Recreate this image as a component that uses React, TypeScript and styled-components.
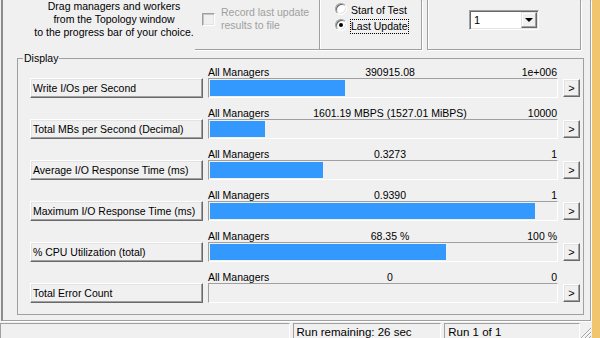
import styled, { createGlobalStyle } from "styled-components"

const GlobalStyle = createGlobalStyle`
  html, body {
    margin: 0;
    padding: 0;
    background: #f0f0f0;
  }
  body {
    font-family: "Liberation Sans", Arial, sans-serif;
    font-size: 10.5px;
    color: #000;
  }
`

type Metric = { name: string; value: string; max: string; fill: number }

const metrics: Metric[] = [
  { name: "Write I/Os per Second", value: "390915.08", max: "1e+006", fill: 0.3909 },
  { name: "Total MBs per Second (Decimal)", value: "1601.19 MBPS (1527.01 MiBPS)", max: "10000", fill: 0.1601 },
  { name: "Average I/O Response Time (ms)", value: "0.3273", max: "1", fill: 0.3273 },
  { name: "Maximum I/O Response Time (ms)", value: "0.9390", max: "1", fill: 0.939 },
  { name: "% CPU Utilization (total)", value: "68.35 %", max: "100 %", fill: 0.6835 },
  { name: "Total Error Count", value: "0", max: "0", fill: 0 },
]

const Screen = styled.div`
  width: 600px;
  height: 338px;
  display: flex;
  overflow: hidden;
  background: #f0f0f0;
`

const Window = styled.div`
  width: 592px;
  display: flex;
  flex-direction: column;
`

const Desktop = styled.div`
  flex: 1;
  background: #f1c46e;
`

const Page = styled.div`
  box-sizing: border-box;
  height: 321px;
  margin: 0 1px 0 1px;
  border-left: 2px solid #8c8c8c;
  border-right: 1px solid #a0a0a0;
  border-bottom: 1px solid #a0a0a0;
  box-shadow: 1px 1px 0 #fff;
`

const TopRow = styled.div`
  display: flex;
  height: 50px;
`

const Instructions = styled.div`
  margin-left: 30px;
  width: 162px;
  text-align: center;
  line-height: 13px;
  white-space: nowrap;
`

const RecordBox = styled.div`
  box-sizing: border-box;
  width: 124px;
  height: 50px;
  padding: 6px 0 0 7px;
  display: flex;
  align-items: flex-start;
  gap: 6px;
  border-bottom: 1px solid #a0a0a0;
  box-shadow: 0 1px 0 #fff;
`

const CheckBox = styled.span`
  box-sizing: border-box;
  width: 13px;
  height: 13px;
  margin-top: 7px;
  flex: none;
  background: #f0f0f0;
  border: 1px solid;
  border-color: #a0a0a0 #fff #fff #a0a0a0;
  box-shadow: inset 1px 1px 0 #c4c4c4, inset -1px -1px 0 #e3e3e3;
`

const DisabledLabel = styled.span`
  color: #a0a0a0;
  line-height: 13px;
  white-space: nowrap;
`

const FrameBox = styled.div<{ $width: number; $gap?: number }>`
  box-sizing: border-box;
  width: ${(p) => p.$width}px;
  height: 50px;
  margin-left: ${(p) => p.$gap ?? 0}px;
  border: 1px solid #a0a0a0;
  border-top: none;
  box-shadow: inset 1px 0 0 #fff, 1px 1px 0 #fff;
`

const RadioGroup = styled(FrameBox)`
  padding: 3px 0 0 15px;
`

const RadioRow = styled.div`
  display: flex;
  align-items: flex-start;
  height: 16px;
  gap: 3px;
`

const RadioDot = styled.span<{ $checked?: boolean }>`
  position: relative;
  box-sizing: border-box;
  width: 12px;
  height: 12px;
  flex: none;
  border-radius: 50%;
  background: #fff;
  border: 1px solid;
  border-color: #a0a0a0 #fff #fff #a0a0a0;
  box-shadow: inset 1px 1px 0 #696969, inset -1px -1px 0 #e3e3e3;
  &::after {
    content: "";
    display: ${(p) => (p.$checked ? "block" : "none")};
    position: absolute;
    left: 3px;
    top: 3px;
    width: 4px;
    height: 4px;
    border-radius: 50%;
    background: #000;
  }
`

const RadioLabel = styled.span<{ $focused?: boolean }>`
  line-height: 13px;
  white-space: nowrap;
  border: 1px ${(p) => (p.$focused ? "dotted #000" : "solid transparent")};
`

const UpdateGroup = styled(FrameBox)`
  display: flex;
  justify-content: center;
  padding-top: 10px;
`

const Combo = styled.div`
  box-sizing: border-box;
  width: 70px;
  height: 20px;
  display: flex;
  padding: 1px;
  background: #fff;
  border: 1px solid;
  border-color: #a0a0a0 #fff #fff #a0a0a0;
  box-shadow: inset 1px 1px 0 #696969, inset -1px -1px 0 #e3e3e3;
`

const ComboText = styled.span`
  flex: 1;
  padding-left: 3px;
  font-size: 11px;
  line-height: 16px;
`

const ComboButton = styled.span`
  box-sizing: border-box;
  width: 16px;
  height: 16px;
  display: flex;
  align-items: center;
  justify-content: center;
  background: #f0f0f0;
  border: 1px solid;
  border-color: #e3e3e3 #696969 #696969 #e3e3e3;
  box-shadow: inset -1px -1px 0 #a0a0a0, inset 1px 1px 0 #fff;
  &::after {
    content: "";
    border-left: 4px solid transparent;
    border-right: 4px solid transparent;
    border-top: 4px solid #000;
  }
`

const Display = styled.fieldset`
  box-sizing: border-box;
  width: 567px;
  margin: 2px 0 0 14px;
  padding: 2px 12px 11px;
  border: 1px solid #a0a0a0;
  min-inline-size: 0;
`

const Legend = styled.legend`
  padding: 0 1px;
  margin-left: -7px;
  line-height: 12px;
`

const Rows = styled.div`
  display: flex;
  flex-direction: column;
  gap: 9px;
`

const Row = styled.div`
  display: grid;
  grid-template-columns: 173px 350px 17px;
  grid-template-rows: 12px 20px;
  column-gap: 5px;
`

const Header = styled.div`
  grid-column: 2 / 4;
  grid-row: 1;
  width: 364px;
  display: grid;
  grid-template-columns: 1fr auto 1fr;
  line-height: 12px;
  white-space: nowrap;
`

const HeaderMax = styled.span`
  text-align: right;
  padding-right: 15px;
`

const RaisedButton = styled.button`
  box-sizing: border-box;
  font: inherit;
  color: #000;
  background: #f0f0f0;
  border: 1px solid;
  border-color: #fff #696969 #696969 #fff;
  box-shadow: inset -1px -1px 0 #a0a0a0, inset 1px 1px 0 #e3e3e3;
  margin: 0;
`

const MetricButton = styled(RaisedButton)`
  grid-column: 1;
  grid-row: 2;
  height: 20px;
  padding: 0 0 0 2px;
  text-align: left;
  white-space: nowrap;
`

const ArrowButton = styled(RaisedButton)`
  grid-column: 3;
  grid-row: 2;
  align-self: center;
  height: 18px;
  padding: 0;
  font-size: 11px;
  line-height: 14px;
`

const Bar = styled.div`
  grid-column: 2;
  grid-row: 2;
  box-sizing: border-box;
  height: 20px;
  padding: 1px;
  border: 1px solid;
  border-color: #a0a0a0 #fff #fff #a0a0a0;
`

const BarFill = styled.div`
  height: 100%;
  background: #3399ff;
`

const StatusBar = styled.div`
  box-sizing: border-box;
  height: 17px;
  padding-top: 2px;
  display: flex;
  gap: 3px;
  font-size: 11.5px;
`

const StatusPanel = styled.div<{ $width: number }>`
  box-sizing: border-box;
  width: ${(p) => p.$width}px;
  padding: 2px 0 0 3px;
  border: 1px solid;
  border-bottom: none;
  border-color: #a0a0a0 #fff #fff #a0a0a0;
  line-height: 13px;
  white-space: nowrap;
  overflow: hidden;
`

const Grip = styled.svg`
  align-self: flex-end;
  margin-left: -2px;
`

export default function App() {
  return (
    <>
      <GlobalStyle />
      <Screen>
        <Window>
          <Page>
            <TopRow>
              <Instructions>
                Drag managers and workers
                <br />
                from the Topology window
                <br />
                to the progress bar of your choice.
              </Instructions>
              <RecordBox>
                <CheckBox />
                <DisabledLabel>
                  Record last update
                  <br />
                  results to file
                </DisabledLabel>
              </RecordBox>
              <RadioGroup $width={103}>
                <RadioRow>
                  <RadioDot />
                  <RadioLabel>Start of Test</RadioLabel>
                </RadioRow>
                <RadioRow>
                  <RadioDot $checked />
                  <RadioLabel $focused>Last Update</RadioLabel>
                </RadioRow>
              </RadioGroup>
              <UpdateGroup $width={154} $gap={5}>
                <Combo>
                  <ComboText>1</ComboText>
                  <ComboButton />
                </Combo>
              </UpdateGroup>
            </TopRow>
            <Display>
              <Legend>Display</Legend>
              <Rows>
                {metrics.map((m) => (
                  <Row key={m.name}>
                    <Header>
                      <span>All Managers</span>
                      <span>{m.value}</span>
                      <HeaderMax>{m.max}</HeaderMax>
                    </Header>
                    <MetricButton>{m.name}</MetricButton>
                    <Bar>
                      <BarFill style={{ width: `${m.fill * 100}%` }} />
                    </Bar>
                    <ArrowButton>&gt;</ArrowButton>
                  </Row>
                ))}
              </Rows>
            </Display>
          </Page>
          <StatusBar>
            <StatusPanel $width={290} />
            <StatusPanel $width={149}>Run remaining: 26 sec</StatusPanel>
            <StatusPanel $width={136}>Run 1 of 1</StatusPanel>
            <Grip width="11" height="12" viewBox="0 0 11 12">
              <g strokeWidth="1">
                <line x1="10" y1="2" x2="0" y2="12" stroke="#a0a0a0" />
                <line x1="11" y1="2" x2="1" y2="12" stroke="#fff" />
                <line x1="10" y1="6" x2="4" y2="12" stroke="#a0a0a0" />
                <line x1="11" y1="6" x2="5" y2="12" stroke="#fff" />
                <line x1="10" y1="10" x2="8" y2="12" stroke="#a0a0a0" />
              </g>
            </Grip>
          </StatusBar>
        </Window>
        <Desktop />
      </Screen>
    </>
  )
}
